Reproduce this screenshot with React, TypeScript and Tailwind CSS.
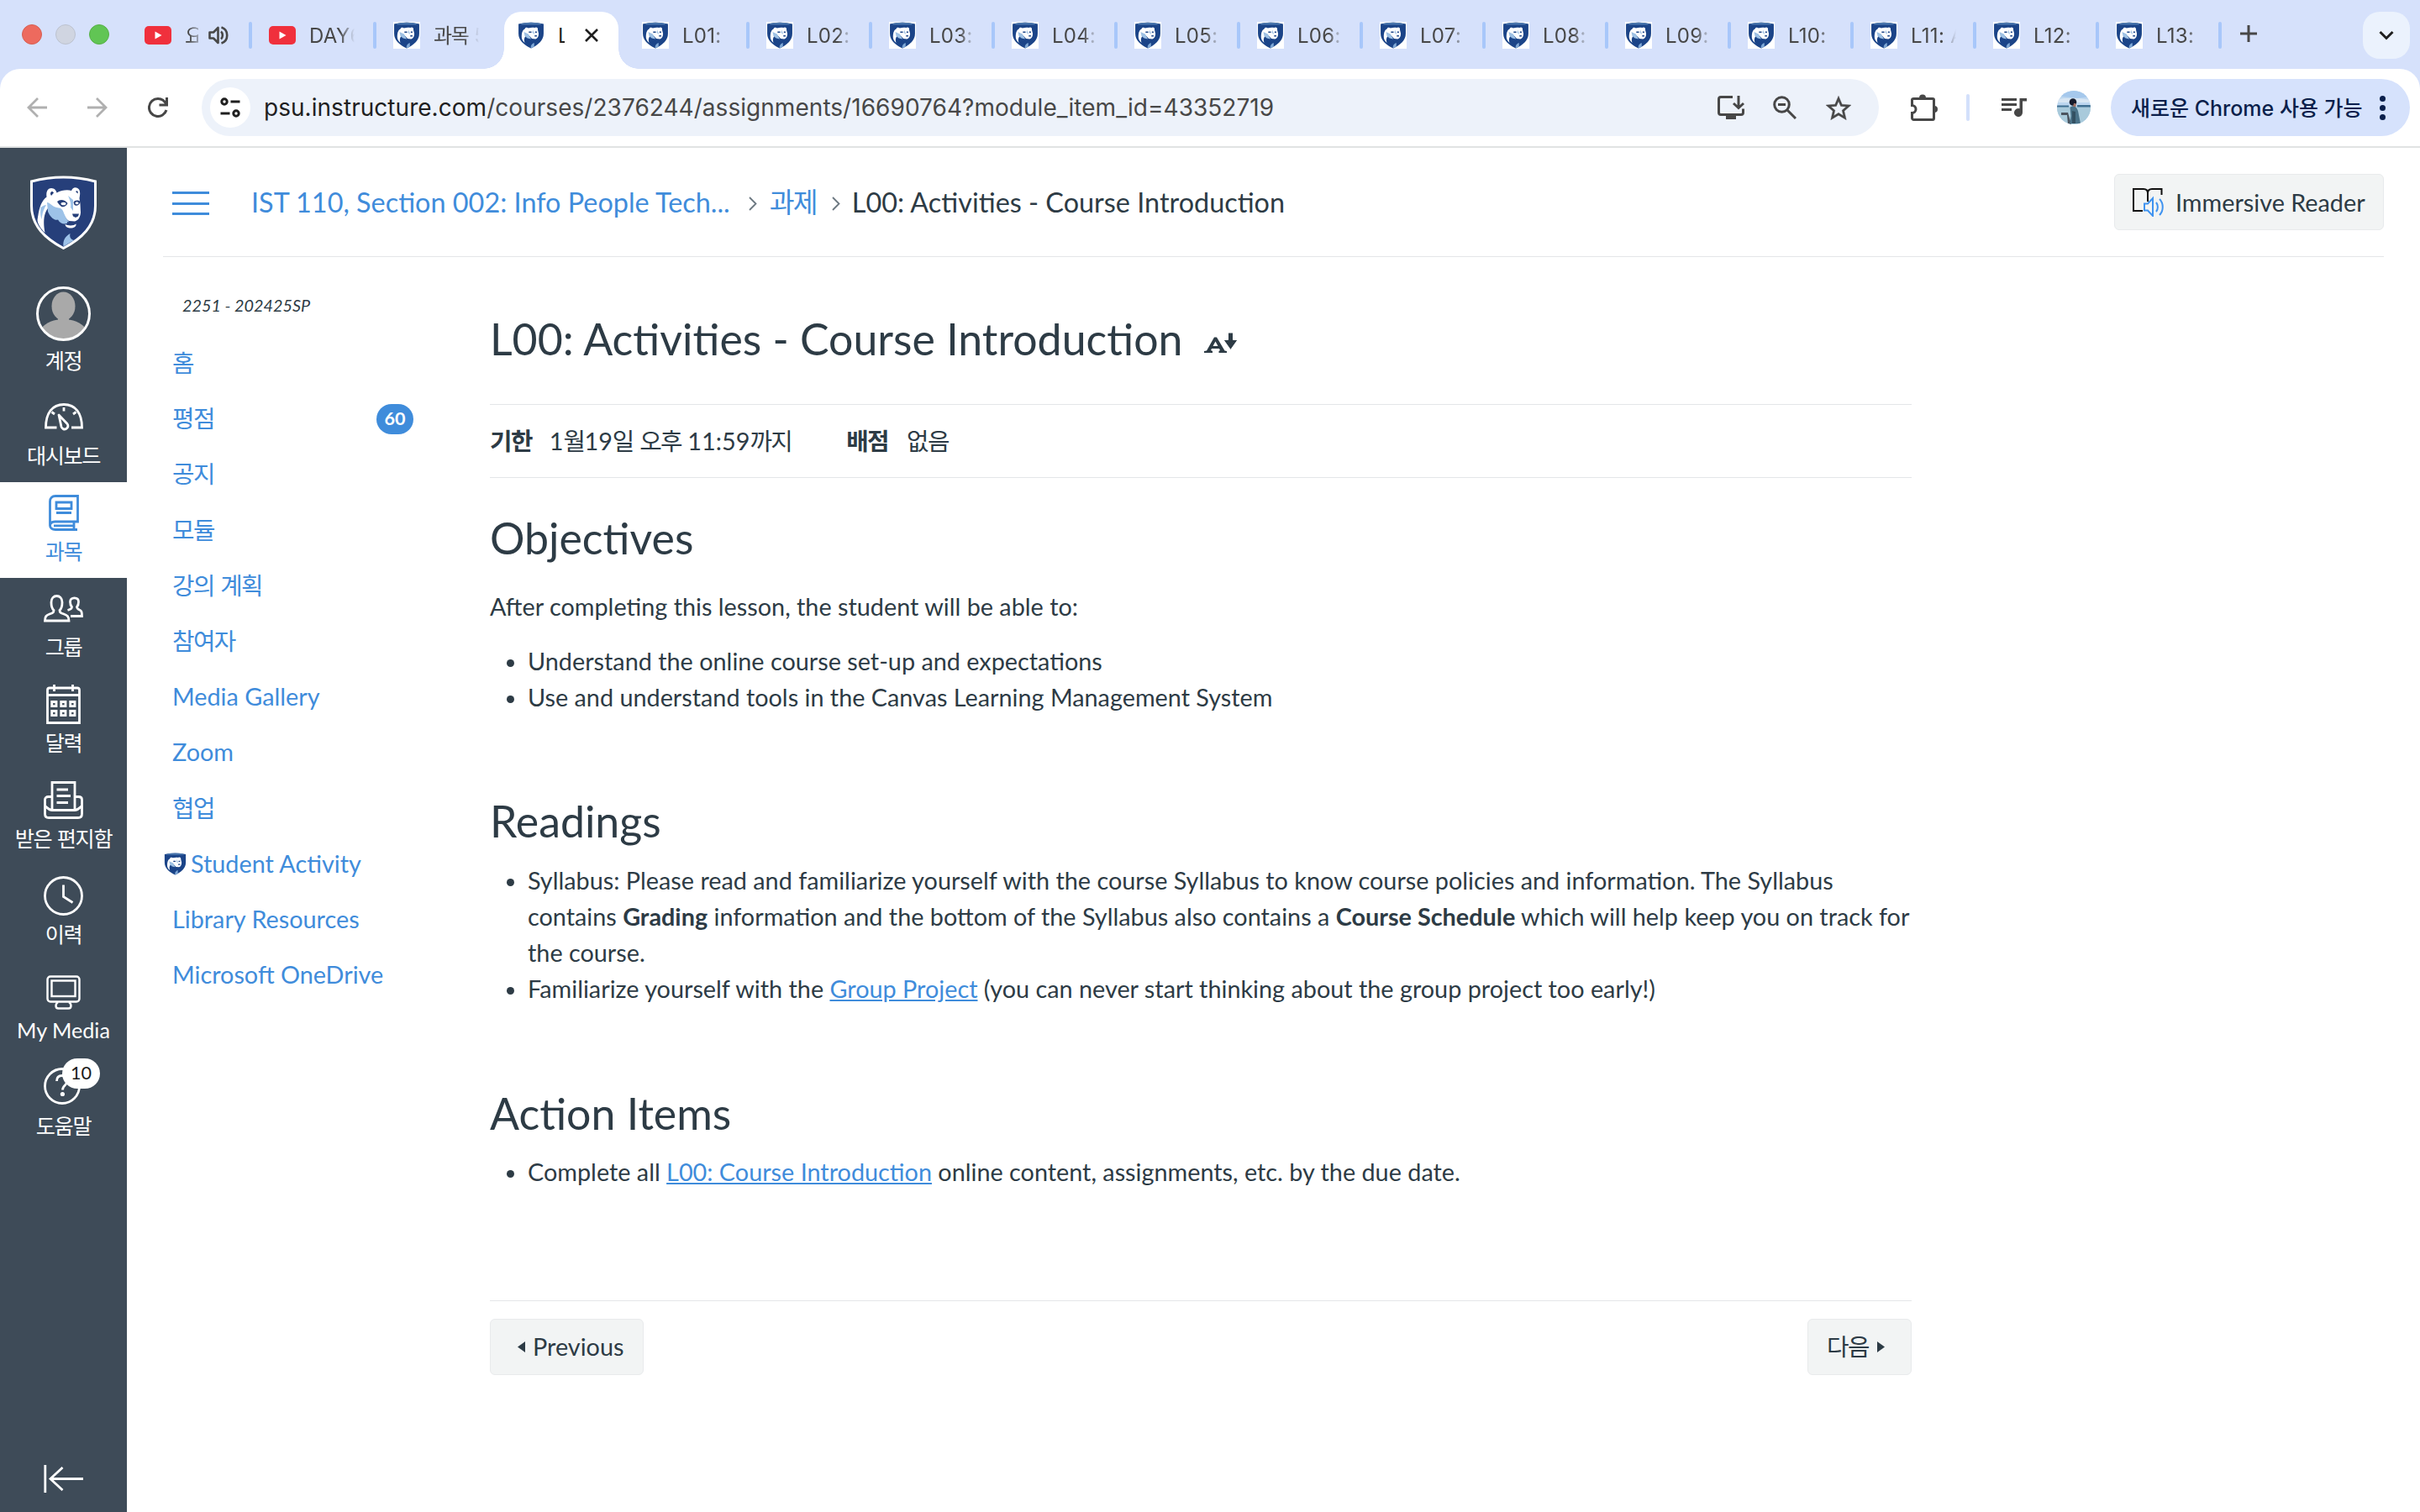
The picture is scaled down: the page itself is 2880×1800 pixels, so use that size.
import type { ReactNode } from "react";

/* Splits a string so that Hangul runs get slightly tighter tracking. */
function T({ children }: { children: string }) {
  return (
    <>
      {children.split(/([\uac00-\ud7a3]+)/).map((part, i) =>
        i % 2 ? (
          <span key={i} className="tracking-[-0.055em]">
            {part}
          </span>
        ) : (
          part
        ),
      )}
    </>
  );
}

/* ---------- Browser chrome ---------- */

function ShieldMark({ className }: { className: string }) {
  return (
    <svg viewBox="1 0 30 32" preserveAspectRatio="none" className={className}>
      <path d="M2 2.500Q16-.8 30 2.500V14C30 22 24 27.500 16 31.500C8 27.500 2 22 2 14Z" fill="#1b4488" />
      <path d="M5 1.900Q16-.6 27 1.900V3.400H5Z" fill="#4a76ad" />
      <path d="M5.500 18C5.500 12 7 9.500 9 8.500C9.500 6 12 6.500 13 7.500C16 6.500 18 6.500 20 7C22 5.500 24 7 23.500 9.500L24.500 14C24.500 18 23 20 21 20.500L17 20L13.500 16L10 17C8 19 8 22 9 25C6.500 22.500 5.500 20.500 5.500 18Z" fill="#fff" />
      <path d="M8 12L13 14.500L16 20.500L12 19.500L9 17Z" fill="#9ec1e4" />
      <path d="M18 9.500L20 15L17.500 13Z" fill="#9ec1e4" />
      <path d="M13.500 11.500H16.500V13H13.500ZM20.500 11.500H22.500V13H20.500ZM20 16H22.500V17.500H20Z" fill="#1b4488" />
      <path d="M16 31.500C15 28.500 17 26 19.500 25V29.500Z" fill="#7fa8d6" />
    </svg>
  );
}

function Favicon() {
  return (
    <span className="size-8 shrink-0 bg-white">
      <ShieldMark className="size-8" />
    </span>
  );
}

function YouTube() {
  return (
    <svg viewBox="0 0 32 22" className="h-[22px] w-8 shrink-0">
      <rect width="32" height="22" rx="5" fill="#f0303c" />
      <path d="M12.500 6.500L20.500 11L12.500 15.500Z" fill="#fff" />
    </svg>
  );
}

function Divider({ show }: { show: boolean }) {
  return <span className={show ? "h-8 w-1 shrink-0 rounded-full bg-[#a8c7fa]" : "h-8 w-1 shrink-0"} />;
}

function Tab({ icon, label, divider = true, wide = false }: { icon: ReactNode; label: string; divider?: boolean; wide?: boolean }) {
  return (
    <div className={wide ? "flex w-[148px] shrink-0 items-center" : "flex w-[146px] shrink-0 items-center"}>
      <Divider show={divider} />
      <span className="ml-5 flex">{icon}</span>
      <span className="ml-4 w-[54px] overflow-hidden whitespace-nowrap pt-px text-[24px] leading-8 tracking-[0.3px] [mask-image:linear-gradient(to_right,black_68%,transparent)]">
        <T>{label}</T>
      </span>
    </div>
  );
}

function TabStrip() {
  return (
    <div className="flex h-[82px] items-stretch pl-[26px] pt-[2px] text-[#474747]">
      <div className="flex w-[122px] shrink-0 items-center gap-4 pb-[2px]">
        <span className="size-6 rounded-full border border-[#d65f52] bg-[#ed6a5e]" />
        <span className="size-6 rounded-full border border-[#bcc2cf] bg-[#d0d5e1]" />
        <span className="size-6 rounded-full border border-[#56b045] bg-[#61c554]" />
      </div>
      <div className="flex w-[148px] shrink-0 items-center">
        <Divider show={false} />
        <span className="ml-5 flex">
          <YouTube />
        </span>
        <span className="ml-4 w-4 overflow-hidden whitespace-nowrap pt-px text-[24px] leading-8 [mask-image:linear-gradient(to_right,black_30%,rgba(0,0,0,.4))]">요</span>
        <svg viewBox="0 0 24 24" className="ml-3 size-6" fill="none" stroke="#474747" strokeWidth="2.600">
          <path d="M1.500 8.500H6L11.500 3V21L6 15.500H1.500Z" strokeLinejoin="round" />
          <path d="M15 7.500C17.500 9.500 17.500 14.500 15 16.500M15.500 2.500C24.500 5.500 24.500 18.500 15.500 21.500" />
        </svg>
      </div>
      <Tab wide icon={<YouTube />} label="DAY6" />
      <Tab wide icon={<Favicon />} label="과목 5" />
      <div className="relative flex w-[148px] shrink-0 items-center">
        <div className="absolute bottom-0 left-2 h-[68px] w-[136px] rounded-t-[20px] bg-white" />
        <div className="absolute -left-4 bottom-0 size-6 bg-[radial-gradient(circle_at_0_0,transparent_23.5px,white_24px)]" />
        <div className="absolute -right-5 bottom-0 size-6 bg-[radial-gradient(circle_at_100%_0,transparent_23.5px,white_24px)]" />
        <div className="relative ml-6 flex items-center">
          <Favicon />
          <span className="ml-4 w-2 overflow-hidden pt-px text-[24px] leading-8 text-[#1f1f1f]">L</span>
          <svg viewBox="0 0 16 16" className="ml-6 size-4" stroke="#1f1f1f" strokeWidth="2.600">
            <path d="M1 1L15 15M15 1L1 15" />
          </svg>
        </div>
      </div>
      <Tab wide icon={<Favicon />} label="L01: A" divider={false} />
      <Tab icon={<Favicon />} label="L02:" />
      <Tab icon={<Favicon />} label="L03:" />
      <Tab icon={<Favicon />} label="L04:" />
      <Tab icon={<Favicon />} label="L05:" />
      <Tab icon={<Favicon />} label="L06:" />
      <Tab icon={<Favicon />} label="L07:" />
      <Tab icon={<Favicon />} label="L08:" />
      <Tab icon={<Favicon />} label="L09:" />
      <Tab icon={<Favicon />} label="L10:" />
      <Tab icon={<Favicon />} label="L11: A" />
      <Tab icon={<Favicon />} label="L12:" />
      <Tab icon={<Favicon />} label="L13:" />
      <div className="flex items-center">
        <Divider show />
        <svg viewBox="0 0 20 20" className="mb-1 ml-[22px] size-5" stroke="#474747" strokeWidth="3">
          <path d="M10 0V20M0 10H20" />
        </svg>
      </div>
      <div className="ml-auto mr-3 mt-3 flex h-14 w-14 items-center justify-center rounded-[20px] bg-[#ebf2fd]">
        <svg viewBox="0 0 18 12" className="h-3 w-[18px]" fill="none" stroke="#1f1f1f" strokeWidth="3">
          <path d="M1.500 2L9 9.500L16.500 2" />
        </svg>
      </div>
    </div>
  );
}

function Toolbar() {
  return (
    <div className="flex h-[94px] items-center rounded-t-[24px] border-b-2 border-[#e1e3e3] bg-white pl-8 pr-3">
      <div className="flex gap-12">
        <svg viewBox="0 0 24 24" className="size-6" fill="none" stroke="#b0b0b0" strokeWidth="2.800">
          <path d="M24 12H2.500M13 1L2 12L13 23" />
        </svg>
        <svg viewBox="0 0 24 24" className="size-6" fill="none" stroke="#b0b0b0" strokeWidth="2.800">
          <path d="M0 12H21.500M11 1L22 12L11 23" />
        </svg>
        <svg viewBox="0 0 24 24" className="size-6" fill="none" stroke="#474747" strokeWidth="3">
          <path d="M22 8.500C20.300 4.500 16.500 1.500 12 1.500A10.500 10.500 0 1 0 22 15" />
          <path d="M22.500 0V9H13.500" />
        </svg>
      </div>
      <div className="ml-10 flex h-[68px] w-[1996px] items-center rounded-full bg-[#edf2fa] pl-2.5 pr-[33px]">
        <span className="flex size-12 items-center justify-center rounded-full bg-white">
          <svg viewBox="0 0 26 24" className="h-6 w-[26px]" fill="none" stroke="#1f1f1f" strokeWidth="3">
            <circle cx="6" cy="5" r="3.200" />
            <path d="M13.500 5H24.500M1.500 19H12.500" />
            <circle cx="20" cy="19" r="3.200" />
          </svg>
        </span>
        <span className="ml-4 text-[28px] leading-9 tracking-[0.04px] text-[#474747]">
          <span className="text-[#1f1f1f]">psu.instructure.com</span>/courses/2376244/assignments/16690764?module_item_id=43352719
        </span>
        <svg viewBox="0 0 32 28" className="ml-auto h-7 w-8" fill="none" stroke="#474747" strokeWidth="3">
          <path d="M18 1.500H4C2.500 1.500 1.500 2.500 1.500 4V20C1.500 21.500 2.500 22.500 4 22.500H28C29.500 22.500 30.500 21.500 30.500 20V15.500" />
          <path d="M25 0V14M19 9L25 14.500L31 9" />
          <path d="M10 23H22V28H10Z" fill="#474747" stroke="none" />
        </svg>
        <svg viewBox="0 0 28 28" className="ml-[34px] size-7" fill="none" stroke="#474747" strokeWidth="3">
          <circle cx="10.500" cy="10.500" r="8.800" />
          <path d="M16.500 16.500L27 27M6 10.500H15" />
        </svg>
        <svg viewBox="2 2 20 19" className="ml-[35px] h-[29px] w-[30px]" fill="#474747" stroke="#474747" strokeWidth=".25">
          <path d="M22 9.240l-7.190-.62L12 2 9.190 8.630 2 9.240l5.460 4.730L5.820 21 12 17.270 18.180 21l-1.630-7.030L22 9.240zM12 15.400l-3.760 2.270 1-4.280-3.320-2.880 4.380-.38L12 6.100l1.710 4.040 4.380.38-3.320 2.880 1 4.280L12 15.400z" />
        </svg>
      </div>
      <svg viewBox="0 0 32 32" className="ml-[38px] size-8">
        <path
          d="M3.500 5.500H26C27 5.500 27.500 6 27.500 7V28.500C27.500 29.500 27 30.500 26 30.500H3.500C2.500 30.500 1.500 29.500 1.500 28.500V22.500A4.500 4.500 0 0 0 1.500 13.500V7C1.500 6 2.500 5.500 3.500 5.500Z"
          fill="none"
          stroke="#474747"
          strokeWidth="3"
        />
        <path d="M10 4.500A4 4 0 0 1 18 4.500ZM28 14A4 4 0 0 1 28 22Z" fill="#474747" />
      </svg>
      <span className="ml-[34px] h-8 w-1 rounded-full bg-[#d3e0fb]" />
      <svg viewBox="0 0 30 22" className="ml-[38px] h-[22px] w-[30px]" fill="#474747">
        <path d="M0 0H18V3H0ZM0 6H18V9H0ZM0 12H12V15H0ZM21.500 0H30V3.500H25V17A5 5 0 1 1 21.500 12.300Z" />
      </svg>
      <svg viewBox="0 0 40 40" className="ml-9 size-10 rounded-full">
        <rect width="40" height="40" fill="#bcd6ef" />
        <path d="M0 0H40V7L24 9L0 6Z" fill="#a5c8ec" />
        <path d="M0 10Q20 7 40 11V14H0Z" fill="#d8e6f3" />
        <rect y="18.500" width="40" height="22" fill="#a9cadb" />
        <path d="M0 17.500H14V19.500H0ZM24 17H40V19.500H24Z" fill="#3f6f92" />
        <path d="M5 26H13L17 40H13L12 29H5Z" fill="#4b5560" />
        <path d="M15.500 20C19 17 23 18 25 24L28 39H15L16.500 30Z" fill="#4a7288" />
        <path d="M18 24L22 25V39H18Z" fill="#335062" />
        <circle cx="19" cy="13.500" r="4.300" fill="#161b2b" />
        <path d="M20 15H22.500V19H19Z" fill="#a06f62" />
      </svg>
      <div className="ml-6 flex h-[68px] w-[356px] items-center rounded-full bg-[#d6e2fc] pl-6 text-[25px] font-medium leading-8 text-[#0b1f4b]">
        <span className="whitespace-nowrap pt-0.5">새로운 Chrome 사용 가능</span>
        <span className="ml-auto mr-[29px] flex flex-col gap-1 [&>i]:size-[7px] [&>i]:rounded-full [&>i]:bg-[#0b1f4b]">
          <i />
          <i />
          <i />
        </span>
      </div>
    </div>
  );
}

/* ---------- Global navigation ---------- */

function LionShield() {
  return (
    <svg viewBox="0 0 79 88" className="h-[88px] w-[79px] shrink-0">
      <path d="M1.500 7Q39.500-3 77.500 7V36C77.500 60 61 75 39.500 86.500C18 75 1.500 60 1.500 36Z" fill="#263f7a" stroke="#fff" strokeWidth="3" />
      <path d="M8.500 53C10 42 12 31 19.500 25.500C18.500 19 21 15 25 15C29 15 31 18 31.500 20.500C37 17.500 44 16.500 49 18C50.500 13.500 55 13 58 16.500C60 19.500 59 24 58.500 27L59.500 34L60 44C59.500 50 57 53.500 53 54.500L46 54C41 51 40 44 35 42L22 38C16 44 15 55 17.500 68C12.500 63 9 58 8.500 53Z" fill="#fff" />
      <path d="M20 32C24 32 26 38 34 38.500C41 39.500 39 48 46 55C44 58.500 36 59 33 52.500C29 54 24 50 21 43Z" fill="#9dc2e8" />
      <path d="M12.500 38C15 36 17 35 19 35C15 42 14 47 13.500 52C12 48 12 42 12.500 38Z" fill="#9dc2e8" />
      <path d="M45 24L51 29V42L48 38C49 33 47 29 45 24Z" fill="#9dc2e8" />
      <path d="M24 22C24 19 26 18 28 20.500L25 24ZM54 19C56 17 57.500 19 56.500 21.500Z" fill="#263f7a" />
      <path d="M32 31C35 28 41 28 44.500 33C43 37 38 38.500 36 36C34 34 33 33 32 31ZM51.500 32C53 29 57 29 59.500 31C59 35 55 37 52.500 35Z" fill="#263f7a" />
      <ellipse cx="39.500" cy="33.500" rx="3" ry="1.800" fill="#fff" />
      <ellipse cx="55.500" cy="32.800" rx="2" ry="1.500" fill="#fff" />
      <path d="M50 45.500H58L57 48.500L54 50L51 48.500ZM44 55C48 57 55 56 58 52L59 55L56 57H44Z" fill="#263f7a" />
      <path d="M41.500 58C45 60 52 60 54.500 57.500C55 61 52 62.500 48 62.500C45 62.500 42 61.500 41.500 58Z" fill="#fff" />
      <path d="M39.500 84.500C38.500 77 42 72 47.500 69C46.500 73 48 76 52 77Z" fill="#9dc2e8" />
    </svg>
  );
}

const line = { fill: "none", stroke: "currentColor", strokeWidth: 2.8 };

function DashboardIcon() {
  return (
    <svg viewBox="0 0 46 33" className="h-[33px] w-[46px]" {...line}>
      <path d="M14.500 29H1.500C1.500 12 9 1.500 23 1.500S44.500 12 44.500 29H32" />
      <path d="M8.500 10.500L12 13M23 5V9.500M37.500 10.500L34 13" />
      <path d="M17 14L27 24.500A4 4 0 1 1 20 28Z" strokeLinejoin="round" />
    </svg>
  );
}
function BookIcon() {
  return (
    <svg viewBox="0 0 36 43" className="h-[43px] w-9" {...line}>
      <path d="M34 41.500H8C4 41.500 1.500 39.500 1.500 36.500V8C1.500 4 4 1.500 8 1.500H34.500V32H7.500C4 32 1.500 33.500 1.500 37" />
      <path d="M6 36.800H30M30 32V41.500" />
      <path d="M9 9H27V16.500H9ZM9 21.500H27" />
    </svg>
  );
}
function GroupsIcon() {
  return (
    <svg viewBox="0 0 47 33" className="h-[33px] w-[47px]" {...line}>
      <path d="M1.500 31C1.500 26 3 24.500 7 23C11 21.700 12 21 12 18.500C9 16 9 12 9 9C9 4 12 1.500 15.500 1.500S22 4 22 9C22 12 22 16 19 18.500C19 21 20 21.700 24 23C28 24.500 30 26 30 31Z" />
      <path d="M28.500 18.500C32 17.500 33.500 16.500 33.500 14.500C31.500 12.500 31.500 10.500 31.500 8.500C31.500 5.500 33.500 3.800 36.500 3.800S41.500 5.500 41.500 8.500C41.500 10.500 41.500 12.500 39.500 14.500C39.500 16.500 40.500 17 42.500 18C45 19 45.500 20.500 45.500 25.500H32" />
    </svg>
  );
}
function CalendarIcon() {
  return (
    <svg viewBox="0 0 41 47" className="h-[47px] w-[41px]" {...line}>
      <path d="M1.500 45.500V6.500C1.500 5 2.500 4 4 4H37C38.500 4 39.500 5 39.500 6.500V45.500ZM1.500 12.500H39.500M9.500 0V8M31.500 0V8" />
      <path d="M6.700 20.500H12V25.700H6.700ZM17.700 20.500H23V25.700H17.700ZM28.700 20.500H34V25.700H28.700ZM6.700 31.500H12V36.700H6.700ZM17.700 31.500H23V36.700H17.700ZM28.700 31.500H34V36.700H28.700Z" />
    </svg>
  );
}
function InboxIcon() {
  return (
    <svg viewBox="0 0 47 45" className="h-[45px] w-[47px]" {...line}>
      <path d="M10 34V1.500H37V34M15.500 10H29M15.500 17.500H32M15.500 25.500H29" />
      <path d="M10 18.500H5.500C3 18.500 1.500 20 1.500 22V39C1.500 42 3 43.500 6 43.500H41C44 43.500 45.500 42 45.500 39V22C45.500 20 44 18.500 41.500 18.500H37" />
      <path d="M1.500 29.500C4 31 6 34.500 10 34.500H37C41 34.500 43 31 45.500 29.500" />
    </svg>
  );
}
function HistoryIcon() {
  return (
    <svg viewBox="0 0 47 47" className="size-[47px]" {...line}>
      <circle cx="23.500" cy="23.500" r="22" />
      <path d="M23.500 10.500V24.500L34.500 31.500" />
    </svg>
  );
}
function MonitorIcon() {
  return (
    <svg viewBox="0 0 41 41" className="mt-0.5 h-[41px] w-[41px]" {...line} strokeWidth={2.4}>
      <rect x="1.500" y="1.500" width="38" height="30" rx="3.500" />
      <rect x="6.500" y="6.500" width="28" height="18.500" />
      <path d="M14 32C12.500 33 11.500 34.500 11.500 36.500C11.500 38.500 12.500 39.500 14.500 39.500H26.500C28.500 39.500 29.500 38.500 29.500 36.500C29.500 34.500 28.500 33 27 32" />
    </svg>
  );
}
function HelpIcon() {
  return (
    <span className="relative mb-[3px] mr-[3px] flex">
      <svg viewBox="0 0 44 44" className="size-11" {...line}>
        <circle cx="22" cy="22" r="20.500" />
        <path d="M15.500 16C15.500 11.500 18 9.500 22 9.500C26 9.500 28.500 12 28.500 15.500C28.500 20.500 22.500 20.500 22.500 26.500" />
        <circle cx="22.400" cy="31.500" r="2.600" fill="currentColor" stroke="none" />
      </svg>
      <span className="absolute -top-[11px] left-[22px] flex h-9 w-[45px] items-center justify-center rounded-full bg-white text-[21.600px] leading-none text-[#1c1c1c]">
        10
      </span>
    </span>
  );
}

function NavItem({ icon, label, active = false }: { icon: ReactNode; label: string; active?: boolean }) {
  return (
    <li
      className={
        active
          ? "flex h-[114px] flex-col items-center bg-white pt-[13px] text-[#3f8cdb]"
          : "flex h-[114px] flex-col items-center pt-[13px] text-white"
      }
    >
      <span className="flex h-[47px] items-center">{icon}</span>
      <span className="mt-[7px] whitespace-nowrap text-[25.200px] leading-[30px]">
        <T>{label}</T>
      </span>
    </li>
  );
}

function GlobalNav() {
  return (
    <nav className="flex w-[151px] shrink-0 flex-col items-center bg-[#3e4b58] pt-[33px]">
      <LionShield />
      <div className="mt-[44px] flex h-[119px] flex-col items-center text-white">
        <svg viewBox="0 0 65 65" className="size-[65px]">
          <defs>
            <clipPath id="avatar-clip">
              <circle cx="32.500" cy="32.500" r="30" />
            </clipPath>
          </defs>
          <g clipPath="url(#avatar-clip)" fill="#a9a9a9">
            <rect x="26" y="30" width="13" height="14" />
            <ellipse cx="32.500" cy="23.500" rx="14" ry="17" />
            <path d="M4 52C12 42 22 39 32.500 39S53 42 61 52V65H4Z" />
          </g>
          <circle cx="32.500" cy="32.500" r="31" fill="none" stroke="#fff" strokeWidth="3" />
        </svg>
        <span className="mt-2 text-[25.200px] leading-[30px]">
          <T>계정</T>
        </span>
      </div>
      <ul className="w-full">
        <NavItem icon={<DashboardIcon />} label="대시보드" />
        <NavItem active icon={<BookIcon />} label="과목" />
        <NavItem icon={<GroupsIcon />} label="그룹" />
        <NavItem icon={<CalendarIcon />} label="달력" />
        <NavItem icon={<InboxIcon />} label="받은 편지함" />
        <NavItem icon={<HistoryIcon />} label="이력" />
        <NavItem icon={<MonitorIcon />} label="My Media" />
        <NavItem icon={<HelpIcon />} label="도움말" />
      </ul>
      <svg viewBox="0 0 47 33" className="mb-[23px] mt-auto h-[33px] w-[47px]" fill="none" stroke="#fff" strokeWidth="2.800">
        <path d="M1.800 0V33M47 16.500H8M22.500 3L8 16.500L22.500 30" />
      </svg>
    </nav>
  );
}

/* ---------- Page ---------- */

function Crumb() {
  return (
    <svg viewBox="0 0 10 17" className="h-[17px] w-2.5" fill="none" stroke="#6b7780" strokeWidth="1.800">
      <path d="M1 1L8.500 8.500L1 16" />
    </svg>
  );
}

function PageHeader() {
  return (
    <header className="mx-[43px] flex h-[130px] items-center border-b border-[#e4e6e8] pl-[11px] text-[32.400px] leading-[44px]">
      <span className="flex flex-col gap-[9.500px] pt-[3px]">
        <span className="h-[3px] w-[44px] bg-[#3f8cdb]" />
        <span className="h-[3px] w-[44px] bg-[#3f8cdb]" />
        <span className="h-[3px] w-[44px] bg-[#3f8cdb]" />
      </span>
      <a className="ml-[50px] text-[#3f8cdb]">IST 110, Section 002: Info People Tech...</a>
      <span className="ml-[22px] mt-1">
        <Crumb />
      </span>
      <a className="ml-[15px] text-[#3f8cdb]">
        <T>과제</T>
      </a>
      <span className="ml-[18px] mt-1">
        <Crumb />
      </span>
      <span className="ml-[14px]">L00: Activities - Course Introduction</span>
      <button className="ml-auto flex h-[67px] w-[321px] items-center rounded-md border border-[#e8eaec] bg-[#f2f4f4] pl-5 text-[28.800px]">
        <svg viewBox="0 0 38 34" className="ml-px h-[34px] w-[38px]" fill="none" strokeWidth="2">
          <path d="M12 27H1V1H13C16 1 18 3 18 6C18 3 20 1 23 1H34.500V8M18 6V16" stroke="#111" />
          <path d="M14 18.500H18L24 12V33L18 26.500H14Z" stroke="#3f93f0" />
          <path d="M28 17C30.500 20 30.500 25 28 28M32 13C37 18 37 27 32 32" stroke="#3f93f0" />
        </svg>
        <span className="ml-[13px]">Immersive Reader</span>
      </button>
    </header>
  );
}

const courseLinks = ["홈", "평점", "공지", "모듈", "강의 계획", "참여자", "Media Gallery", "Zoom", "협업", "Student Activity", "Library Resources", "Microsoft OneDrive"];

function CourseNav() {
  return (
    <aside className="w-[432px] shrink-0 pl-[54px] pt-[42px]">
      <p className="pl-3 text-[19.800px] italic leading-[30px]">2251 - 202425SP</p>
      <ul className="mt-[21.500px] w-[287px] text-[28.800px] text-[#3f8cdb]">
        {courseLinks.map((name) => (
          <li key={name} className="flex h-[66.200px] items-center leading-[43px]">
            {name === "Student Activity" && <ShieldMark className="-ml-[10px] mr-[5px] h-[27px] w-[27px]" />}
            <span>
              <T>{name}</T>
            </span>
            {name === "평점" && (
              <span className="ml-auto flex h-9 w-11 items-center justify-center rounded-full bg-[#3f8cdb] text-[21.600px] font-bold leading-none text-white">60</span>
            )}
          </li>
        ))}
      </ul>
    </aside>
  );
}

function Assignment() {
  return (
    <main className="w-[1692px] text-[28.800px] leading-[43.200px]">
      <div className="flex h-[175px] items-start pt-[66px]">
        <h1 className="text-[51.840px] leading-[62px]">L00: Activities - Course Introduction</h1>
        <svg viewBox="0 0 40 24" className="ml-[25px] mt-[24px] h-6 w-10" fill="#2d3b45">
          <path fillRule="evenodd" d="M0 24V22L3 21.500L12 5.500H15L24.500 21.500L27 22V24H17.500V22L19 21L18 19H9L8 21L10 22V24ZM10.500 16H16.500L13.500 10.500Z" />
          <path d="M28.500 0H34.500V8.500H40L31.500 20.500L23 8.500H28.500Z" stroke="#fff" strokeWidth="1" />
        </svg>
      </div>
      <div className="flex h-[88px] items-center border-y border-[#e4e6e8] pt-0.5">
        <b>
          <T>기한</T>
        </b>
        <span className="ml-[21px]">
          <T>1월19일 오후 11:59까지</T>
        </span>
        <b className="ml-[65px]">
          <T>배점</T>
        </b>
        <span className="ml-[22px]">
          <T>없음</T>
        </span>
      </div>
      <h2 className="mt-[40px] text-[51.840px] leading-[62.200px]">Objectives</h2>
      <p className="mt-[29.500px]">After completing this lesson, the student will be able to:</p>
      <ul className="mt-[22px] list-disc pl-[45px]">
        <li>Understand the online course set-up and expectations</li>
        <li>Use and understand tools in the Canvas Learning Management System</li>
      </ul>
      <h2 className="mt-[94px] text-[51.840px] leading-[62.200px]">Readings</h2>
      <ul className="mt-[18px] list-disc pl-[45px]">
        <li>
          Syllabus: Please read and familiarize yourself with the course Syllabus to know course policies and information. The Syllabus contains{" "}
          <strong>Grading</strong> information and the bottom of the Syllabus also contains a <strong>Course Schedule</strong> which will help keep you
          on track for the course.
        </li>
        <li>
          Familiarize yourself with the <a className="text-[#3f8cdb] underline">Group Project</a> (you can never start thinking about the group
          project too early!)
        </li>
      </ul>
      <h2 className="mt-[94.500px] text-[51.840px] leading-[62.200px]">Action Items</h2>
      <ul className="mt-[18px] list-disc pl-[45px]">
        <li>
          Complete all <a className="text-[#3f8cdb] underline">L00: Course Introduction</a> online content, assignments, etc. by the due date.
        </li>
      </ul>
      <div className="mt-[130.500px] flex justify-between border-t border-[#e4e6e8] pt-[21px]">
        <button className="flex h-[67px] w-[183px] items-center rounded-md border border-[#e8eaec] bg-[#f2f4f4] pl-8">
          <svg viewBox="0 0 9 13" className="h-[13px] w-[9px]" fill="#2d3b45">
            <path d="M9 0V13L0 6.500Z" />
          </svg>
          <span className="ml-[9px]">Previous</span>
        </button>
        <button className="flex h-[67px] w-[124px] items-center rounded-md border border-[#e8eaec] bg-[#f2f4f4] pl-[22px]">
          <T>다음</T>
          <svg viewBox="0 0 9 13" className="ml-[10px] h-[13px] w-[9px]" fill="#2d3b45">
            <path d="M0 0V13L9 6.500Z" />
          </svg>
        </button>
      </div>
    </main>
  );
}

export default function App() {
  return (
    <div className="flex h-[1800px] w-[2880px] flex-col overflow-hidden bg-white">
      <div className="shrink-0 bg-[#d6e1fb] font-['Inter','Noto_Sans_CJK_KR',sans-serif]">
        <TabStrip />
        <Toolbar />
      </div>
      <div className="flex min-h-0 flex-1 font-['Lato','Noto_Sans_CJK_KR',sans-serif] text-[#2d3b45]">
        <GlobalNav />
        <div className="flex-1">
          <PageHeader />
          <div className="flex">
            <CourseNav />
            <Assignment />
          </div>
        </div>
      </div>
    </div>
  );
}
